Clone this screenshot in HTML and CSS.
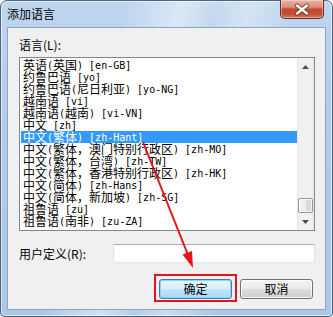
FILE: index.html
```html
<!DOCTYPE html>
<html lang="zh-CN">
<head>
<meta charset="utf-8">
<title>添加语言</title>
<link rel="stylesheet" href="styles.css">
</head>
<body>
<div class="window">
  <div class="titlebar">
    <span class="title">添加语言</span>
    <div class="close">
      <svg width="44" height="19" viewBox="0 0 44 19">
        <path d="M17 5.5 L27 13.5 M27 5.5 L17 13.5" stroke="#5a2a22" stroke-width="4.2" stroke-linecap="round" fill="none" opacity="0.75"/>
        <path d="M17 5.5 L27 13.5 M27 5.5 L17 13.5" stroke="#ffffff" stroke-width="2.4" stroke-linecap="round" fill="none"/>
      </svg>
    </div>
  </div>
  <div class="client">
    <div class="label">语言(L):</div>
    <div class="listbox">
      <ul class="items">
        <li>英语<span class="a">(</span>英国<span class="a">) [en-GB]</span></li>
        <li>约鲁巴语<span class="a"> [yo]</span></li>
        <li>约鲁巴语<span class="a">(</span>尼日利亚<span class="a">) [yo-NG]</span></li>
        <li>越南语<span class="a"> [vi]</span></li>
        <li>越南语<span class="a">(</span>越南<span class="a">) [vi-VN]</span></li>
        <li>中文<span class="a"> [zh]</span></li>
        <li class="sel">中文<span class="a">(</span>繁体<span class="a">) [zh-Hant]</span></li>
        <li>中文<span class="a">(</span>繁体，澳门特别行政区<span class="a">) [zh-MO]</span></li>
        <li>中文<span class="a">(</span>繁体，台湾<span class="a">) [zh-TW]</span></li>
        <li>中文<span class="a">(</span>繁体，香港特别行政区<span class="a">) [zh-HK]</span></li>
        <li>中文<span class="a">(</span>简体<span class="a">) [zh-Hans]</span></li>
        <li>中文<span class="a">(</span>简体，新加坡<span class="a">) [zh-SG]</span></li>
        <li>祖鲁语<span class="a"> [zu]</span></li>
        <li>祖鲁语<span class="a">(</span>南非<span class="a">) [zu-ZA]</span></li>
      </ul>
      <div class="scrollbar">
        <div class="sb-btn">
          <svg width="7" height="4" viewBox="0 0 7 4"><path d="M3.5 0 L7 4 L0 4 Z" fill="#4a4a4a"/></svg>
        </div>
        <div class="sb-track"><div class="sb-thumb"></div></div>
        <div class="sb-btn">
          <svg width="7" height="4" viewBox="0 0 7 4"><path d="M0 0 L7 0 L3.5 4 Z" fill="#4a4a4a"/></svg>
        </div>
      </div>
    </div>
    <div class="custom-row">
      <span class="label">用户定义(R):</span>
      <div class="textbox"></div>
    </div>
    <div class="buttons">
      <div class="btn default">确定</div>
      <div class="btn">取消</div>
    </div>
  </div>
  <svg class="annot" width="333" height="317" viewBox="0 0 333 317">
    <line x1="143" y1="142" x2="188" y2="255" stroke="#e3141b" stroke-width="2"/>
    <polygon points="193,268 182.5,254.5 192,251" fill="#e3141b"/>
    <rect x="155" y="275" width="81" height="26" fill="none" stroke="#e3141b" stroke-width="2"/>
  </svg>
</div>
</body>
</html>
```
FILE: styles.css
```css
* {
  box-sizing: border-box;
  margin: 0;
  padding: 0;
}

html, body {
  width: 333px;
  height: 317px;
  background: #ffffff;
  overflow: hidden;
}

body {
  font-family: "Noto Sans CJK SC", "Noto Sans", sans-serif;
  font-size: 12px;
  color: #000;
}

.window {
  position: relative;
  width: 333px;
  height: 317px;
  display: flex;
  flex-direction: column;
  border: 1px solid #52657a;
  border-radius: 7px 7px 4px 4px;
  background:
    linear-gradient(105deg, rgba(255,255,255,0) 30%, rgba(255,255,255,0.45) 44%, rgba(255,255,255,0.1) 52%, rgba(255,255,255,0.35) 60%, rgba(255,255,255,0) 72%),
    linear-gradient(180deg, #bfd6ef 0%, #b3cdea 30%, #abc8e8 100%);
  box-shadow: inset 0 0 0 1px rgba(255,255,255,0.55);
}

.titlebar {
  height: 27px;
  display: flex;
  align-items: flex-start;
  padding-left: 6px;
}

.title {
  margin-top: 7px;
  line-height: 12px;
  font-size: 12px;
  color: #000;
}

.close {
  margin-left: auto;
  margin-right: 8px;
  margin-top: -1px;
  width: 44px;
  height: 19px;
  border: 1px solid #6b2f26;
  border-top: none;
  border-radius: 0 0 5px 5px;
  background: linear-gradient(180deg, #eab3a6 0%, #dc8c7a 40%, #c7462c 52%, #c5503a 80%, #d57a62 100%);
  box-shadow: inset 0 0 0 1px rgba(255,255,255,0.35);
  display: flex;
  align-items: center;
  justify-content: center;
}

.close svg {
  display: block;
  margin: 0 -1px;
}

.client {
  flex: 1;
  margin: 0 7px 7px 7px;
  background: #f0f0f0;
  box-shadow: 0 0 0 1px #8ea5c0;
  padding: 11px 10px 0 11px;
  display: flex;
  flex-direction: column;
}

.label {
  line-height: 12px;
  height: 12px;
  white-space: nowrap;
}

.client > .label {
  margin-bottom: 6px;
}

.listbox {
  height: 174px;
  border: 1px solid #828790;
  background: #fff;
  display: flex;
}

.items {
  list-style: none;
  flex: 1;
  padding: 1px 0 0 1px;
}

.items li {
  height: 12px;
  line-height: 12px;
  padding-left: 2px;
  white-space: nowrap;
  font-family: "Noto Sans CJK SC", sans-serif;
  font-size: 12px;
}

.items li.sel {
  background: #3399ff;
  color: #fff;
}

.a {
  font-family: "DejaVu Sans Mono", "Liberation Mono", monospace;
  font-size: 10px;
  vertical-align: 1px;
  white-space: pre;
}

.scrollbar {
  width: 17px;
  display: flex;
  flex-direction: column;
  background: linear-gradient(90deg, #e3e3e3 0px, #f1f1f1 2px, #f1f1f1 14px, #e6e6e6 17px);
}

.sb-btn {
  height: 17px;
  display: flex;
  align-items: center;
  justify-content: center;
}

.sb-btn svg {
  display: block;
}

.sb-track {
  flex: 1;
  display: flex;
  flex-direction: column;
  justify-content: flex-end;
  padding: 0 1px;
}

.sb-thumb {
  height: 15px;
  border: 1px solid #979797;
  border-radius: 2px;
  background: linear-gradient(90deg, #f4f4f4 0%, #ececec 50%, #dcdcdc 51%, #d4d4d4 100%);
  box-shadow: inset 0 0 0 1px rgba(255,255,255,0.8);
}

.custom-row {
  margin-top: 13px;
  height: 19px;
  display: flex;
  align-items: center;
}

.textbox {
  margin-left: auto;
  width: 202px;
  height: 19px;
  background: #fff;
  border: 1px solid #e2e3ea;
  border-top-color: #abadb3;
  border-bottom-color: #e3e9ef;
}

.buttons {
  margin-top: 16px;
  margin-right: 2px;
  display: flex;
  justify-content: flex-end;
  gap: 8px;
}

.btn {
  width: 73px;
  height: 20px;
  border: 1px solid #707070;
  border-radius: 3px;
  background: linear-gradient(180deg, #f2f2f2 0%, #ebebeb 48%, #dddddd 52%, #cfcfcf 100%);
  box-shadow: inset 0 0 0 1px rgba(255,255,255,0.85);
  display: flex;
  align-items: center;
  justify-content: center;
  line-height: 12px;
  font-size: 12px;
}

.btn.default {
  border-color: #3c7fb1;
  background: linear-gradient(180deg, #eaf6fd 0%, #d9f0fc 48%, #bee6fd 52%, #a7d9f5 100%);
  box-shadow: inset 0 0 0 1px #8fd3f5;
}

.annot {
  position: absolute;
  left: -1px;
  top: -1px;
  pointer-events: none;
}
```
